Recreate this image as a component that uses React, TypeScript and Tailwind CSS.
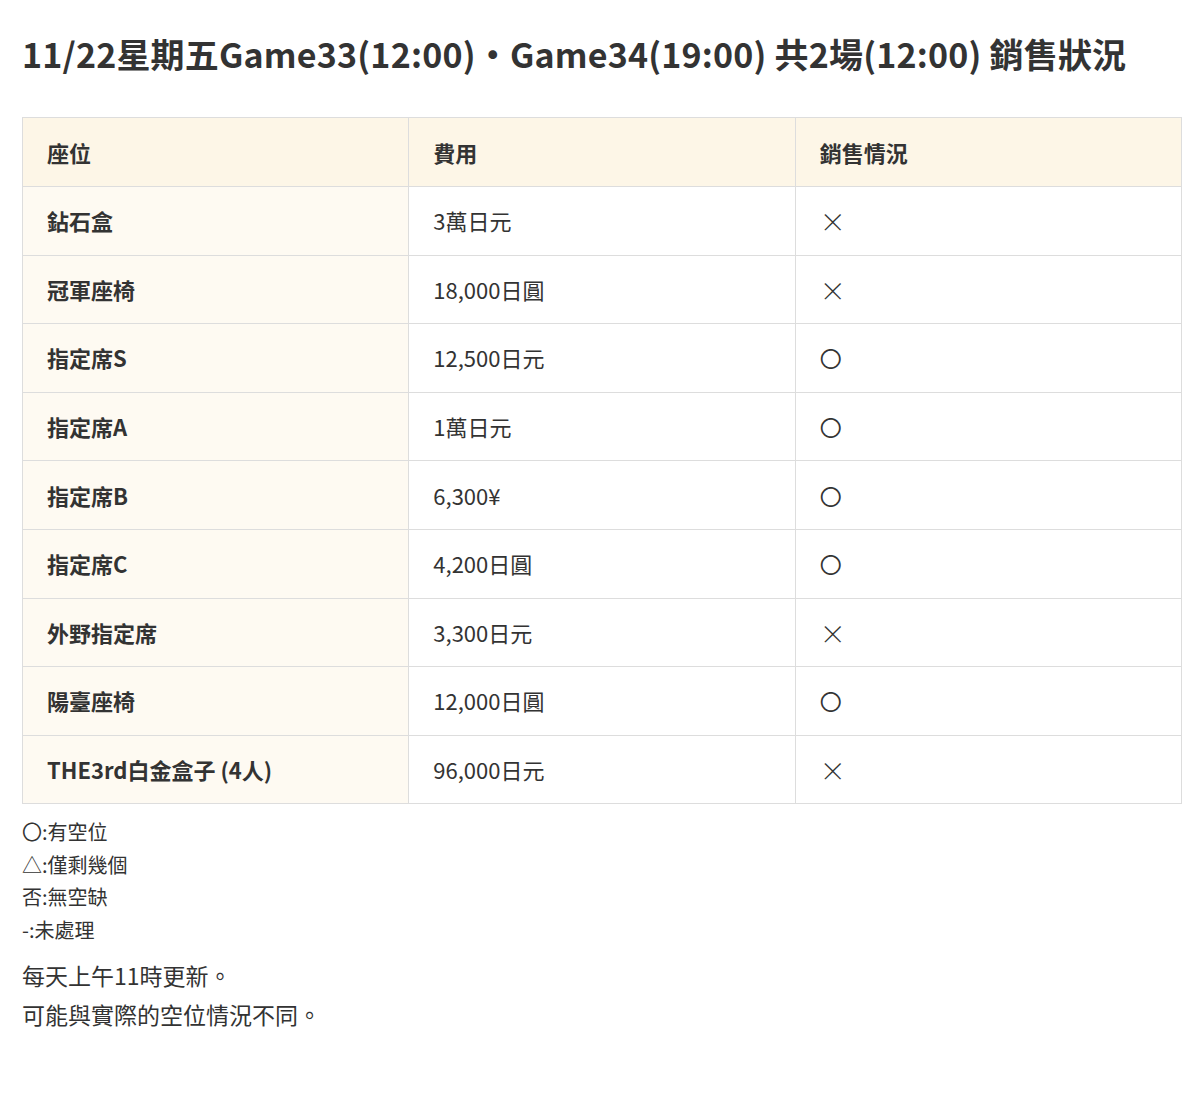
const rows = [
  ['鉆石盒', '3萬日元', '×'],
  ['冠軍座椅', '18,000日圓', '×'],
  ['指定席S', '12,500日元', '〇'],
  ['指定席A', '1萬日元', '〇'],
  ['指定席B', '6,300¥', '〇'],
  ['指定席C', '4,200日圓', '〇'],
  ['外野指定席', '3,300日元', '×'],
  ['陽臺座椅', '12,000日圓', '〇'],
  ['THE3rd白金盒子 (4人)', '96,000日元', '×'],
];

export default function App() {
  return (
    <div className="bg-white px-[22px] pt-[26px] pb-4 text-[#333]" style={{ fontFamily: '"Noto Sans CJK TC", "Noto Sans", sans-serif' }}>
      <h1 className="text-[34px] font-bold leading-[55px] mb-[36px] tracking-[0.2px]">
        11/22星期五Game33(12:00)・Game34(19:00) 共2場(12:00) 銷售狀況
      </h1>
      <table className="w-[1160px] border-collapse table-fixed text-[22px]">
        <thead>
          <tr className="bg-[#fdf6e7] h-[69px]">
            <th className="border border-[#ddd] text-left font-bold px-6">座位</th>
            <th className="border border-[#ddd] text-left font-bold px-6">費用</th>
            <th className="border border-[#ddd] text-left font-bold px-6">銷售情況</th>
          </tr>
        </thead>
        <tbody>
          {rows.map((r) => (
            <tr key={r[0]} className="h-[68.6px]">
              <td className="border border-[#ddd] bg-[#fefaf2] font-bold px-6">{r[0]}</td>
              <td className="border border-[#ddd] px-6">{r[1]}</td>
              <td className="border border-[#ddd] px-6">{r[2] === '×' ? <span className="text-[26px] font-light">×</span> : '〇'}</td>
            </tr>
          ))}
        </tbody>
      </table>
      <div className="mt-[12px] text-[20px] leading-[32.5px]">
        <div>〇:有空位</div>
        <div>△:僅剩幾個</div>
        <div>否:無空缺</div>
        <div>-:未處理</div>
      </div>
      <div className="mt-[10px] text-[23px] leading-[39px]">
        <div>每天上午11時更新。</div>
        <div>可能與實際的空位情況不同。</div>
      </div>
    </div>
  );
}
